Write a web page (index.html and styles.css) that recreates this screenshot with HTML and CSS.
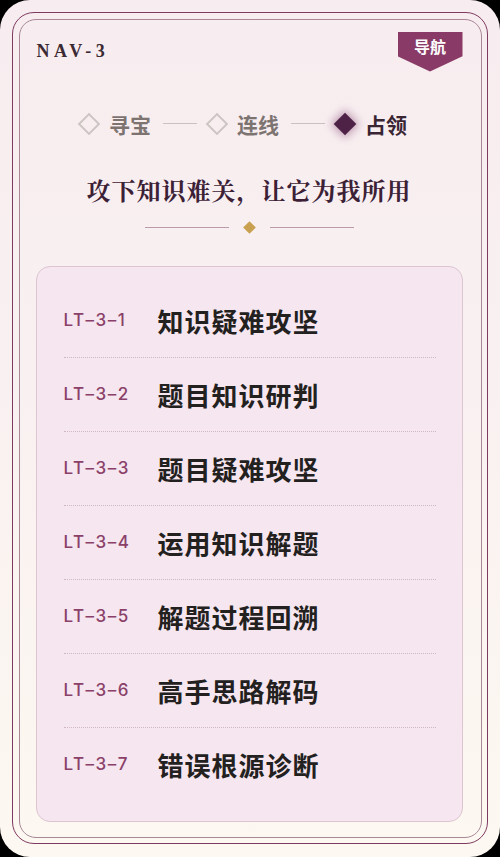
FILE: index.html
```html
<!DOCTYPE html>
<html lang="zh-CN">
<head>
    <meta charset="UTF-8">
    <meta name="viewport" content="width=device-width, initial-scale=1.0">
    <title>NAV-3 导航</title>
    <link rel="stylesheet" href="styles.css">
</head>
<body>

<div class="screen">
    <div class="frame">
        <div class="inner">
            <div class="head">
                <div class="nav-code">NAV-3</div>
                <div class="badge">导航</div>
            </div>

            <!-- 步骤条 -->
            <div class="steps">
                <div class="step">
                    <span class="dia"></span>
                    <span class="step-name">寻宝</span>
                </div>
                <span class="step-line"></span>
                <div class="step">
                    <span class="dia"></span>
                    <span class="step-name">连线</span>
                </div>
                <span class="step-line"></span>
                <div class="step active">
                    <span class="dia"></span>
                    <span class="step-name">占领</span>
                </div>
            </div>

            <h1 class="title">攻下知识难关，让它为我所用</h1>
            <div class="divider">
                <span class="div-line"></span>
                <span class="div-dot"></span>
                <span class="div-line"></span>
            </div>

            <div class="panel">
                <div class="row"><span class="code">LT–3–1</span><span class="name">知识疑难攻坚</span></div>
                <div class="row"><span class="code">LT–3–2</span><span class="name">题目知识研判</span></div>
                <div class="row"><span class="code">LT–3–3</span><span class="name">题目疑难攻坚</span></div>
                <div class="row"><span class="code">LT–3–4</span><span class="name">运用知识解题</span></div>
                <div class="row"><span class="code">LT–3–5</span><span class="name">解题过程回溯</span></div>
                <div class="row"><span class="code">LT–3–6</span><span class="name">高手思路解码</span></div>
                <div class="row"><span class="code">LT–3–7</span><span class="name">错误根源诊断</span></div>
            </div>
        </div>
    </div>
</div>

</body>
</html>
```

FILE: styles.css
```css
html, body {
    margin: 0;
    padding: 0;
    background-color: #000;
}
body {
    font-family: "Noto Sans CJK SC", "Liberation Sans", sans-serif;
}
.screen {
    width: 500px;
    height: 857px;
    border-radius: 30px;
    overflow: hidden;
    background: linear-gradient(180deg, #f7ecef 0%, #f9f1f1 45%, #fdf8f1 100%);
    padding-top: 12px;
    box-sizing: border-box;
}
.frame {
    margin: 0 12px;
    height: 832px;
    box-sizing: border-box;
    border: 1.5px solid #7e3b60;
    border-radius: 22px;
    padding: 5.5px;
}
.inner {
    height: 100%;
    box-sizing: border-box;
    border: 1px solid #a88797;
    border-radius: 17px;
    padding: 12px 18px 0 16px;
    display: flex;
    flex-direction: column;
}
.head {
    display: flex;
    justify-content: space-between;
    align-items: flex-start;
}
.nav-code {
    margin: 7px 0 0 1px;
    font-family: "Liberation Serif", serif;
    font-size: 18px;
    font-weight: 700;
    line-height: 24px;
    letter-spacing: 4.5px;
    color: #3b2a34;
}
.badge {
    width: 65px;
    height: 40px;
    background-color: #8a3a66;
    clip-path: polygon(0 0, 100% 0, 100% 62%, 50% 100%, 0 62%);
    color: #fff;
    font-size: 16px;
    font-weight: 700;
    text-align: center;
    line-height: 28px;
}

/* steps */
.steps {
    margin-top: 37px;
    height: 30px;
    display: flex;
    justify-content: center;
    align-items: center;
    padding-right: 14px;
}
.step {
    display: flex;
    align-items: center;
    gap: 8px;
}
.dia {
    width: 16px;
    height: 16px;
    margin: 0 4px;
    box-sizing: border-box;
    border: 2px solid #cdc5c4;
    transform: rotate(45deg);
}
.step-name {
    font-size: 21px;
    font-weight: 700;
    line-height: 30px;
    color: #7d7472;
}
.step.active .dia {
    border: none;
    background-color: #4e2147;
    box-shadow: 0 0 8px 2px rgba(120, 50, 100, 0.45);
}
.step.active .step-name {
    color: #3a2533;
}
.step-line {
    width: 34px;
    height: 1.5px;
    margin: 0 8px 0 12px;
    background-color: #cbc1c0;
}

.title {
    margin: 34px 0 0 0;
    font-family: "Noto Serif CJK SC", "Noto Sans CJK SC", serif;
    font-size: 24px;
    font-weight: 700;
    line-height: 34px;
    letter-spacing: 1px;
    text-align: center;
    color: #3c2136;
}
.divider {
    margin-top: 16px;
    height: 10px;
    display: flex;
    justify-content: center;
    align-items: center;
    gap: 16px;
}
.div-line {
    width: 84px;
    height: 1.5px;
    background-color: #b99bab;
}
.div-dot {
    width: 9px;
    height: 9px;
    background-color: #c8a050;
    transform: rotate(45deg);
}

/* list */
.panel {
    margin-top: 33px;
    padding: 17px 26px 20px 27px;
    background-color: #f5e6ef;
    border: 1px solid #dcc4d1;
    border-radius: 14px;
}
.row {
    height: 73px;
    display: flex;
    align-items: center;
    border-bottom: 1px dotted #cdb8c4;
}
.row:last-child {
    border-bottom: none;
}
.code {
    width: 94px;
    flex-shrink: 0;
    font-family: Inter, "Liberation Sans", sans-serif;
    font-size: 17px;
    font-weight: 500;
    letter-spacing: 1.5px;
    color: #8a4068;
}
.name {
    font-size: 26px;
    font-weight: 700;
    letter-spacing: 1px;
    color: #232020;
}
```
